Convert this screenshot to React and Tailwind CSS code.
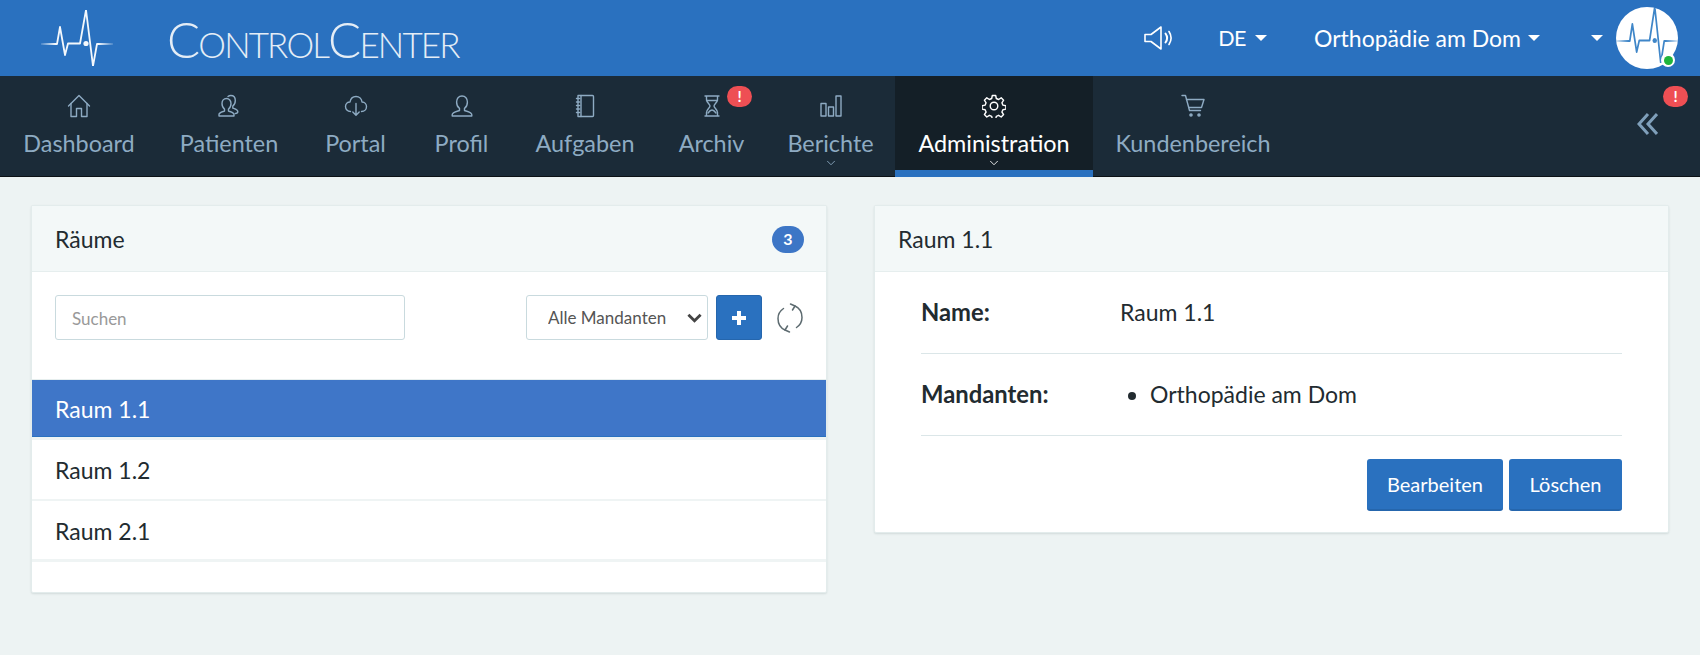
import { ChevronDown } from 'lucide-react';

const font = { fontFamily: 'Lato, "Open Sans", sans-serif' };

const Icon = ({ children }) => (
  <svg viewBox="0 0 24 24" fill="none" stroke="currentColor" strokeWidth="1.400" strokeLinejoin="round" strokeLinecap="round" className="h-6 w-6">
    {children}
  </svg>
);

const person = 'M12 2c-3.400 0-5.400 2.500-5.400 5.900 0 2.900 1.300 5.300 2.900 6.400v2.200c-3 1-7.300 1.800-7.300 4.200V22h19.600v-1.300c0-2.400-4.300-3.200-7.300-4.200v-2.200c1.600-1.100 2.900-3.500 2.900-6.400C17.400 4.500 15.400 2 12 2z';

const HomeIcon = () => (
  <Icon>
    <path d="M1.500 12 12 1.500 22.500 12" />
    <path d="M4 9.500V22.500h5.500v-8h5v8H20V9.500" />
  </Icon>
);
const UsersIcon = () => (
  <Icon>
    <path d="M9.500 4.500c-2.800 0-4.500 2.200-4.500 5.100 0 2.500 1 4.500 2.500 5.500v2c-2.500.9-5.500 1.500-5.500 3.400v1.500h15v-1.500c0-1.900-3-2.500-5.500-3.400v-2c1.500-1 2.500-3 2.500-5.500 0-2.900-1.700-5.100-4.500-5.100z" />
    <path d="M11 2.500c.8-.7 1.700-1 2.800-1 2.800 0 4.500 2.200 4.500 5.100 0 2.500-1 4.500-2.500 5.500v2c1.800.7 5 1.500 5 3.400 0 1.200-1 2-2.500 2" />
  </Icon>
);
const CloudIcon = () => (
  <Icon>
    <path d="M6.500 17.500C3.500 17.500 1.500 15.200 1.500 12.500S3.500 8 6 8c.6-3.500 3.200-5.500 6-5.500 3.300 0 5.700 2.400 6 5.500 2.700.1 4.500 2.200 4.500 4.500 0 2.800-2 5-5 5" />
    <path d="M12 9.500v11.500M8.800 18 12 21.300 15.200 18" />
  </Icon>
);
const UserIcon = () => (
  <Icon><path d={person} /></Icon>
);
const BookIcon = () => (
  <Icon>
    <path d="M5 1.500h14.500a1 1 0 0 1 1 1v19a1 1 0 0 1-1 1H5z" />
    <path d="M8 1.500v21M3.500 4.500H6.500M3.500 8H6.500M3.500 11.500H6.500M3.500 15H6.500M3.500 18.500H6.500" />
  </Icon>
);
const GlassIcon = () => (
  <Icon>
    <path d="M5 2h14M5 22h14M6.500 2v3.500c0 3 3.500 4.500 3.500 6.500s-3.500 3.500-3.500 6.500V22M17.500 2v3.500c0 3-3.500 4.500-3.500 6.500s3.500 3.500 3.500 6.500V22" />
    <path d="M6.500 6.500h11M8 19c1.500-2 2.500-3 4-3s2.500 1 4 3" />
  </Icon>
);
const BarsIcon = () => (
  <Icon>
    <path d="M2 9.500h5v12.500H2zM9.500 13h5v9h-5zM17 2h5v20h-5z" />
  </Icon>
);
const GearIcon = () => (
  <Icon>
    <circle cx="12" cy="12" r="3.800" />
    <path d="M10.300 1.500h3.400l.6 3 2.300 1 2.600-1.700 2.400 2.400-1.700 2.600 1 2.300 3 .6v3.400l-3 .6-1 2.300 1.700 2.600-2.400 2.400-2.600-1.700-2.300 1-.6 3h-3.400l-.6-3-2.300-1-2.600 1.700-2.400-2.400 1.700-2.600-1-2.300-3-.6v-3.400l3-.6 1-2.300-1.700-2.600 2.400-2.400 2.600 1.700 2.300-1z" />
  </Icon>
);
const CartIcon = () => (
  <Icon>
    <path d="M1 1.500h3.500l4 15h11" />
    <path d="M5.500 5.500H23l-2.500 8H7.700" />
    <circle cx="10" cy="21" r="1.100" fill="currentColor" />
    <circle cx="18" cy="21" r="1.100" fill="currentColor" />
  </Icon>
);

const navItems = [
  { label: 'Dashboard', icon: HomeIcon, width: 'w-[156px]' },
  { label: 'Patienten', icon: UsersIcon, width: 'w-[144px]' },
  { label: 'Portal', icon: CloudIcon, width: 'w-[109px]' },
  { label: 'Profil', icon: UserIcon, width: 'w-[103px]' },
  { label: 'Aufgaben', icon: BookIcon, width: 'w-[144px]' },
  { label: 'Archiv', icon: GlassIcon, width: 'w-[109px]', badge: true },
  { label: 'Berichte', icon: BarsIcon, width: 'w-[129px]', sub: true },
  { label: 'Administration', icon: GearIcon, width: 'w-[198px]', sub: true, active: true },
  { label: 'Kundenbereich', icon: CartIcon, width: 'w-[200px]' },
];

const Caret = () => <span className="inline-block h-0 w-0 border-x-[6.500px] border-t-[6.500px] border-x-transparent border-t-white" />;

const AlertBadge = ({ className }) => (
  <span className={`absolute flex h-[21px] w-[25px] items-center justify-center rounded-[11px] bg-[#ee4f54] text-[15px] font-bold leading-none text-white ${className}`}>!</span>
);

const Pulse = ({ className, stroke, strokeWidth = 1.800, id }) => (
  <svg viewBox="0 0 72 56" preserveAspectRatio="none" fill="none" strokeWidth={strokeWidth} strokeLinejoin="round" className={className}>
    <defs>
      <linearGradient id={id} gradientUnits="userSpaceOnUse" x1="0" y1="0" x2="72" y2="0">
        <stop offset="0" stopColor={stroke} stopOpacity="0.150" />
        <stop offset="0.200" stopColor={stroke} />
        <stop offset="0.800" stopColor={stroke} />
        <stop offset="1" stopColor={stroke} stopOpacity="0.150" />
      </linearGradient>
    </defs>
    <path d="M0 34H16L19 17 24 45 27 33.500H39L45 0 52 56 56 34H72" stroke={`url(#${id})`} />
    <circle cx="45" cy="33.500" r="2.600" fill={stroke} />
  </svg>
);

function TopBar() {
  return (
    <header className="flex h-[76px] items-center bg-[#2a71bf] text-white">
      <Pulse id="logo-pulse" className="ml-[41px] h-[56px] w-[72px]" stroke="#f4f8fc" />
      <div className="ml-[54px] flex items-baseline pt-[3px] font-light leading-none tracking-[-1.850px] text-[#e4edf6]">
        <span className="text-[49px]">C</span>
        <span className="text-[35px]">ONTROL</span>
        <span className="text-[49px]">C</span>
        <span className="text-[35px]">ENTER</span>
      </div>
      <div className="ml-auto flex items-center text-[23px]">
        <svg viewBox="0 0 28 24" fill="none" stroke="currentColor" strokeWidth="1.600" strokeLinejoin="round" strokeLinecap="round" className="mr-[46px] h-[24px] w-[28px]">
          <path d="M1 8.500h6L17 1v22L7 15.500H1z" />
          <path d="M21.500 7.500c2 2.800 2 6.200 0 9" strokeWidth="2" />
          <path d="M25 5.500c2.600 4 2.600 9 0 13" />
        </svg>
        <span className="text-[21.500px] tracking-[-0.500px]">DE</span>
        <span className="ml-[9px] mr-[47px] flex"><Caret /></span>
        <span>Orthopädie am Dom</span>
        <span className="ml-[7px] mr-[51px] flex"><Caret /></span>
        <Caret />
        <div className="relative ml-[13px] mr-[22px] flex h-[62px] w-[62px] items-center justify-center overflow-hidden rounded-full bg-white">
          <Pulse id="avatar-pulse" className="-mt-[6px] h-[56px] w-[62px] shrink-0" stroke="#3f86c8" strokeWidth={2} />
        </div>
        <span className="relative -ml-[39px] mr-[25px] mt-[44px] flex h-[14px] w-[14px] items-center justify-center rounded-full bg-white">
          <span className="h-[9px] w-[9px] rounded-full bg-[#1fb53c]" />
        </span>
      </div>
    </header>
  );
}

function NavBar() {
  return (
    <nav className="relative flex h-[101px] border-b border-[#0c1216] bg-[#1b2b38] pl-px text-[23.400px]">
      {navItems.map(item => {
        const ItemIcon = item.icon;
        return (
          <div key={item.label} className={`relative -mb-px flex flex-col items-center pt-[18px] ${item.width} ${item.active ? 'border-b-[7px] border-[#2a71bf] bg-[#141f27] text-white' : 'text-[#8eabc3]'}`}>
            <ItemIcon />
            <span className="mt-[11px] leading-[28px]">{item.label}</span>
            {item.sub && <ChevronDown className="-mt-px h-[14px] w-[16px]" strokeWidth={1.500} />}
            {item.badge && <AlertBadge className="top-[10px] left-[70px]" />}
          </div>
        );
      })}
      <AlertBadge className="top-[10px] right-[12px]" />
      <svg viewBox="0 0 21 22" fill="none" stroke="#7f9fba" strokeWidth="3" className="absolute top-[37px] right-[42px] h-[22px] w-[21px]">
        <path d="M11 1 2 11l9 10M20 1l-9 10 9 10" />
      </svg>
    </nav>
  );
}

const cardClass = 'rounded-[2px] border border-[#e3ecec] bg-white shadow-[0_1px_2px_rgba(60,90,90,0.15)]';

function RoomList() {
  return (
    <section className={`${cardClass} h-[388px] w-[796px]`}>
      <div className="flex h-[66px] items-center justify-between border-b border-[#e6eeee] bg-[#f3f8f8] pl-[23px] pr-[22px] pt-px text-[#222b30]">
        <span>Räume</span>
        <span className="flex h-[27px] w-[32px] items-center justify-center rounded-full bg-[#3d76c6] text-[16px] font-bold text-white">3</span>
      </div>
      <div className="flex h-[107px] items-start pl-[23px] pr-[23px] pt-[23px]">
        <input placeholder="Suchen" className="h-[45px] w-[350px] rounded-[3px] border border-[#c9dade] px-[16px] pt-px text-[17px] outline-none placeholder:text-[#999]" />
        <div className="relative ml-auto">
          <select defaultValue="Alle Mandanten" className="h-[45px] w-[182px] appearance-none rounded-[3px] border border-[#c9dade] bg-white pl-[21px] pt-px text-[17px] text-[#555] outline-none">
            <option>Alle Mandanten</option>
          </select>
          <svg viewBox="0 0 16 10" fill="none" stroke="#444" strokeWidth="3" className="pointer-events-none absolute right-[6px] top-[18px] h-[10px] w-[15px]">
            <path d="M1.500 1.500 8 8l6.500-6.500" />
          </svg>
        </div>
        <button type="button" className="ml-[8px] flex h-[45px] w-[46px] items-center justify-center rounded-[3px] border border-[#2566ad] bg-[#2a71bf]">
          <svg viewBox="0 0 14 14" fill="#fff" className="h-[14px] w-[14px]"><path d="M5 0h4v5h5v4H9v5H5V9H0V5h5z" /></svg>
        </button>
        <svg viewBox="0 0 26 30" fill="none" stroke="#5d6b70" strokeWidth="1.500" strokeLinecap="round" strokeLinejoin="round" className="ml-[15px] mt-[8px] h-[30px] w-[26px]">
          <path d="M8 27C3.500 25 1 20.500 1 15.500 1 11 3.500 7.500 6.500 5.500" />
          <path d="M18 3c4.500 2 7 6.500 7 11.500 0 4.500-2.500 8-5.500 10" />
          <path d="M13.500 1 18 3l-2.500 4M12.500 29 8 27l2.500-4" />
        </svg>
      </div>
      <div className="flex flex-col text-[#222b30]">
        <div className="flex h-[58px] items-center border-y border-y-[#e6eeee] border-b-[#2a71bf] bg-[#3f76c8] pl-[23px] pt-[2px] text-white">Raum 1.1</div>
        <div className="h-[3px] bg-[#eff4f4]" />
        <div className="flex h-[61px] items-center border-b-[2px] border-[#eff4f4] pl-[23px] pt-[2px]">Raum 1.2</div>
        <div className="flex h-[61px] items-center border-b-[3px] border-[#eff4f4] pl-[23px] pt-[2px]">Raum 2.1</div>
      </div>
    </section>
  );
}

function RoomDetail() {
  return (
    <section className={`${cardClass} h-[328px] w-[795px]`}>
      <div className="flex h-[66px] items-center border-b border-[#e6eeee] bg-[#f3f8f8] pl-[23px] pt-px text-[#222b30]">Raum 1.1</div>
      <div className="px-[46px] text-[#222b30]">
        <div className="flex h-[82px] items-center border-b border-[#dbe6e8]">
          <span className="w-[199px] text-[23.800px] font-bold">Name:</span>
          <span>Raum 1.1</span>
        </div>
        <div className="flex h-[82px] items-center border-b border-[#dbe6e8]">
          <span className="w-[199px] text-[23.800px] font-bold">Mandanten:</span>
          <ul className="list-disc pl-[30px]">
            <li>Orthopädie am Dom</li>
          </ul>
        </div>
        <div className="mt-[23px] flex justify-end gap-[6px] text-[20px] text-white">
          <button type="button" className="h-[52px] w-[136px] rounded-[3px] border-b-2 border-[#2566ad] bg-[#2a71bf]">Bearbeiten</button>
          <button type="button" className="h-[52px] w-[113px] rounded-[3px] border-b-2 border-[#2566ad] bg-[#2a71bf]">Löschen</button>
        </div>
      </div>
    </section>
  );
}

export default function App() {
  return (
    <div className="h-[655px] w-[1700px] overflow-hidden bg-[#edf3f3] text-[23px]" style={font}>
      <TopBar />
      <NavBar />
      <main className="flex items-start gap-[47px] pl-[31px] pt-[28px]">
        <RoomList />
        <RoomDetail />
      </main>
    </div>
  );
}
